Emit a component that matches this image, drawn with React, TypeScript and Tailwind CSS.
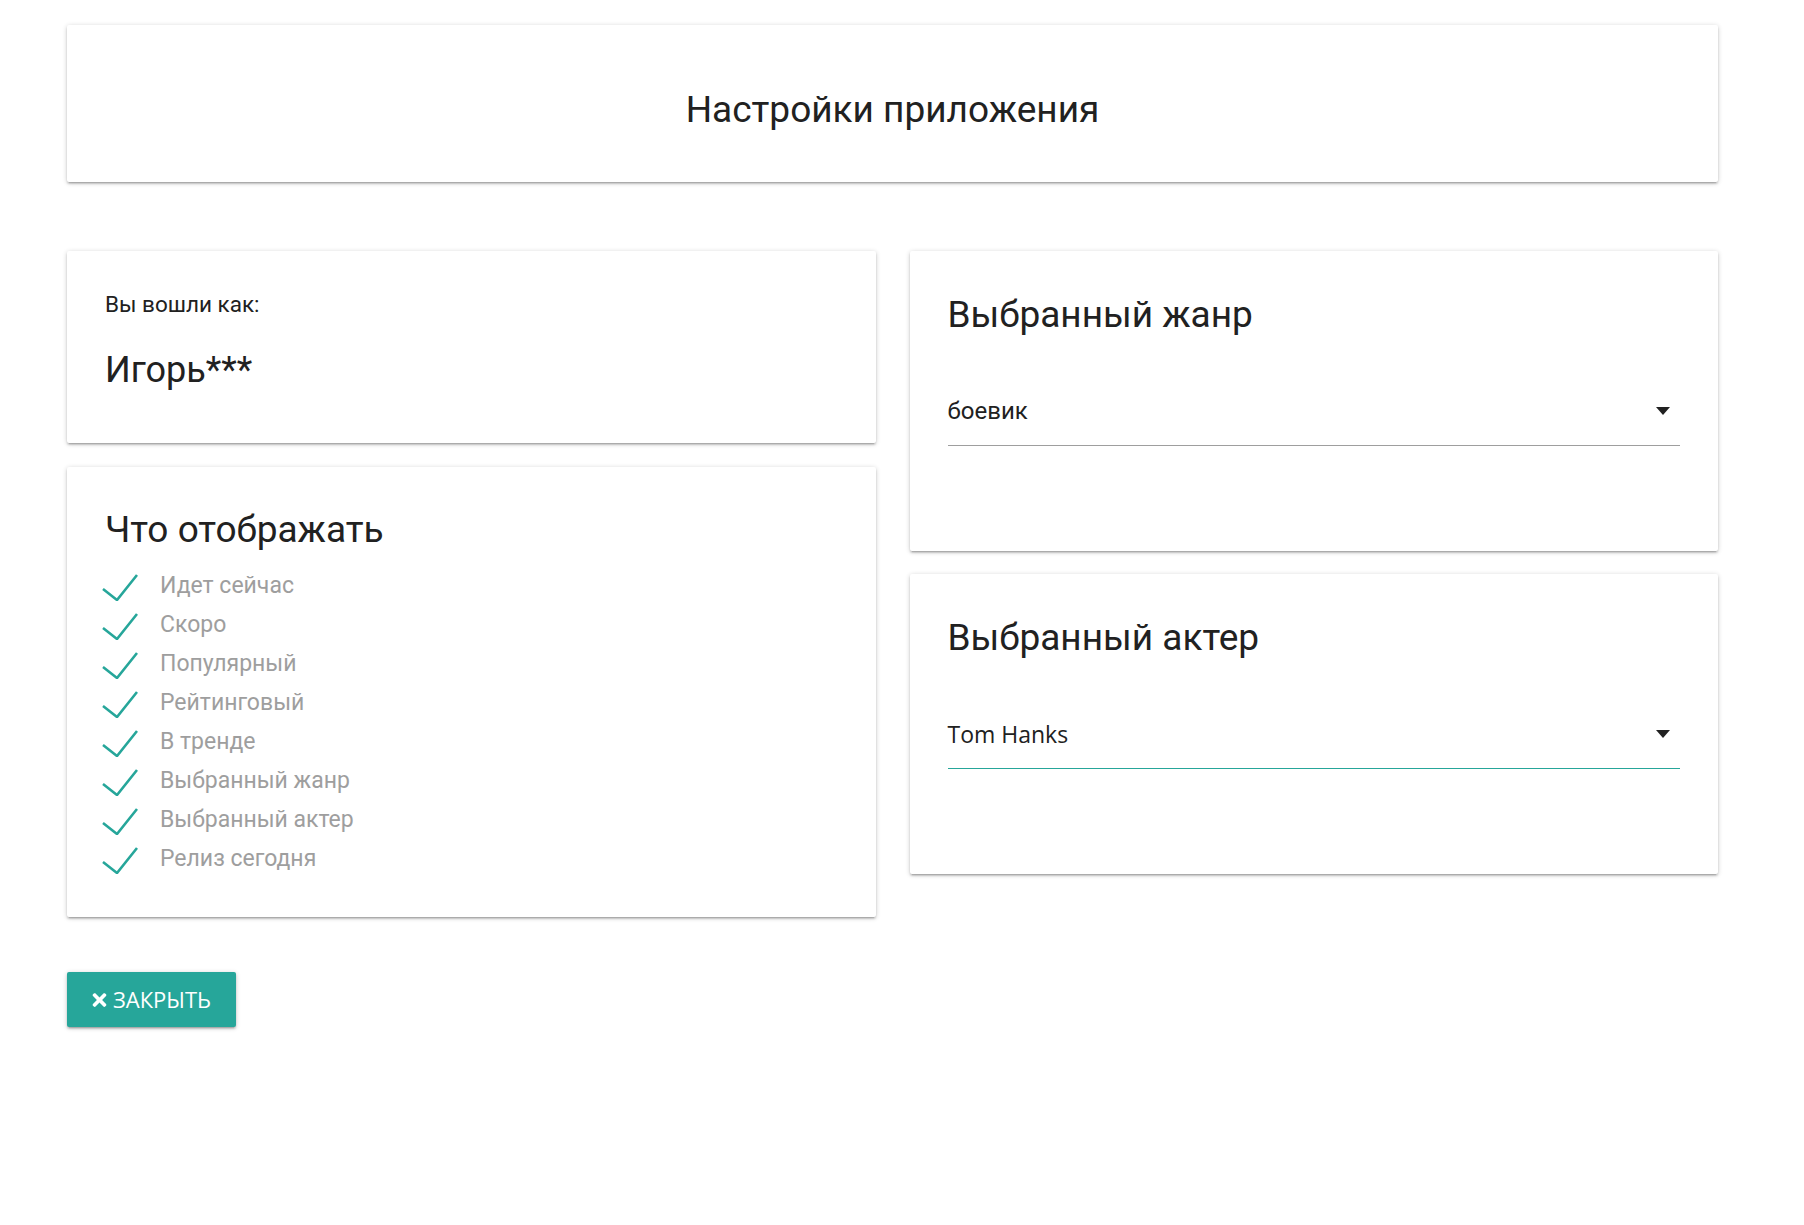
import { FaTimes } from "react-icons/fa";

const items = [
  "Идет сейчас",
  "Скоро",
  "Популярный",
  "Рейтинговый",
  "В тренде",
  "Выбранный жанр",
  "Выбранный актер",
  "Релиз сегодня",
];

const card =
  "bg-white rounded-[2px] shadow-[0_2px_2px_0_rgba(0,0,0,0.14),0_3px_1px_-2px_rgba(0,0,0,0.12),0_1px_5px_0_rgba(0,0,0,0.2)]";

function Caret() {
  return (
    <svg width="14" height="8" viewBox="0 0 14 8" className="mt-[11px]">
      <polygon points="0,0 14,0 7,8" fill="#212121" />
    </svg>
  );
}

function SelectCard({
  title,
  value,
  active,
  valueFont,
}: {
  title: string;
  value: string;
  active?: boolean;
  valueFont: string;
}) {
  return (
    <div className={`${card} h-[300px] pt-[42px] px-[38px]`}>
      <h2 className="text-[37px] leading-[44px] text-[#212121] font-normal">{title}</h2>
      <div
        className={`mt-[57px] h-[52px] pt-[2px] pr-[10px] flex justify-between items-start border-b ${
          active ? "border-[#26a69a]" : "border-[#9e9e9e]"
        }`}
      >
        <span className={`leading-[30px] text-[#212121] ${valueFont}`}>{value}</span>
        <Caret />
      </div>
    </div>
  );
}

export default function App() {
  return (
    <div className="min-h-screen bg-white font-['Roboto',sans-serif] pt-[25px]">
      <div className="ml-[67px] w-[1651px]">
        <div className={`${card} h-[157px] flex items-center justify-center`}>
          <h1 className="text-[37px] leading-[48px] text-[#212121] font-normal mt-[13px]">
            Настройки приложения
          </h1>
        </div>

        <div className="mt-[69px] grid grid-cols-2 gap-x-[34px] items-start">
          <div className="flex flex-col gap-[24px]">
            <div className={`${card} h-[192px] pt-[38px] px-[38px]`}>
              <p className="text-[22.5px] leading-[30px] text-[#212121]">Вы вошли как:</p>
              <p className="mt-[28px] text-[36px] leading-[46px] text-[#212121]">Игорь***</p>
            </div>
            <div className={`${card} h-[450px] pt-[41px] px-[38px]`}>
              <h2 className="text-[37px] leading-[44px] text-[#212121] font-normal">Что отображать</h2>
              <ul className="mt-[15px]">
                {items.map((t) => (
                  <li key={t} className="h-[39px] flex items-center">
                    <svg width="36" height="28" viewBox="0 0 36 28" className="-ml-[3px] shrink-0">
                      <polyline
                        points="1,16 15,27 35,2"
                        fill="none"
                        stroke="#26a69a"
                        strokeWidth="2.6"
                      />
                    </svg>
                    <span className="ml-[22px] text-[23px] text-[#9e9e9e]">{t}</span>
                  </li>
                ))}
              </ul>
            </div>
          </div>

          <div className="flex flex-col gap-[23px]">
            <SelectCard
              title="Выбранный жанр"
              value="боевик"
              valueFont="font-['Roboto',sans-serif] text-[24px]"
            />
            <SelectCard
              title="Выбранный актер"
              value="Tom Hanks"
              active
              valueFont="font-['Open_Sans',sans-serif] text-[23px]"
            />
          </div>
        </div>

        <button className="mt-[55px] h-[55px] w-[169px] bg-[#26a69a] rounded-[2px] text-white flex items-center justify-center gap-[6px] font-['Open_Sans',sans-serif] text-[22px] uppercase shadow-[0_2px_2px_0_rgba(0,0,0,0.14),0_3px_1px_-2px_rgba(0,0,0,0.12),0_1px_5px_0_rgba(0,0,0,0.2)]">
          <FaTimes className="w-[15px] h-[20px]" />
          Закрыть
        </button>
      </div>
    </div>
  );
}
